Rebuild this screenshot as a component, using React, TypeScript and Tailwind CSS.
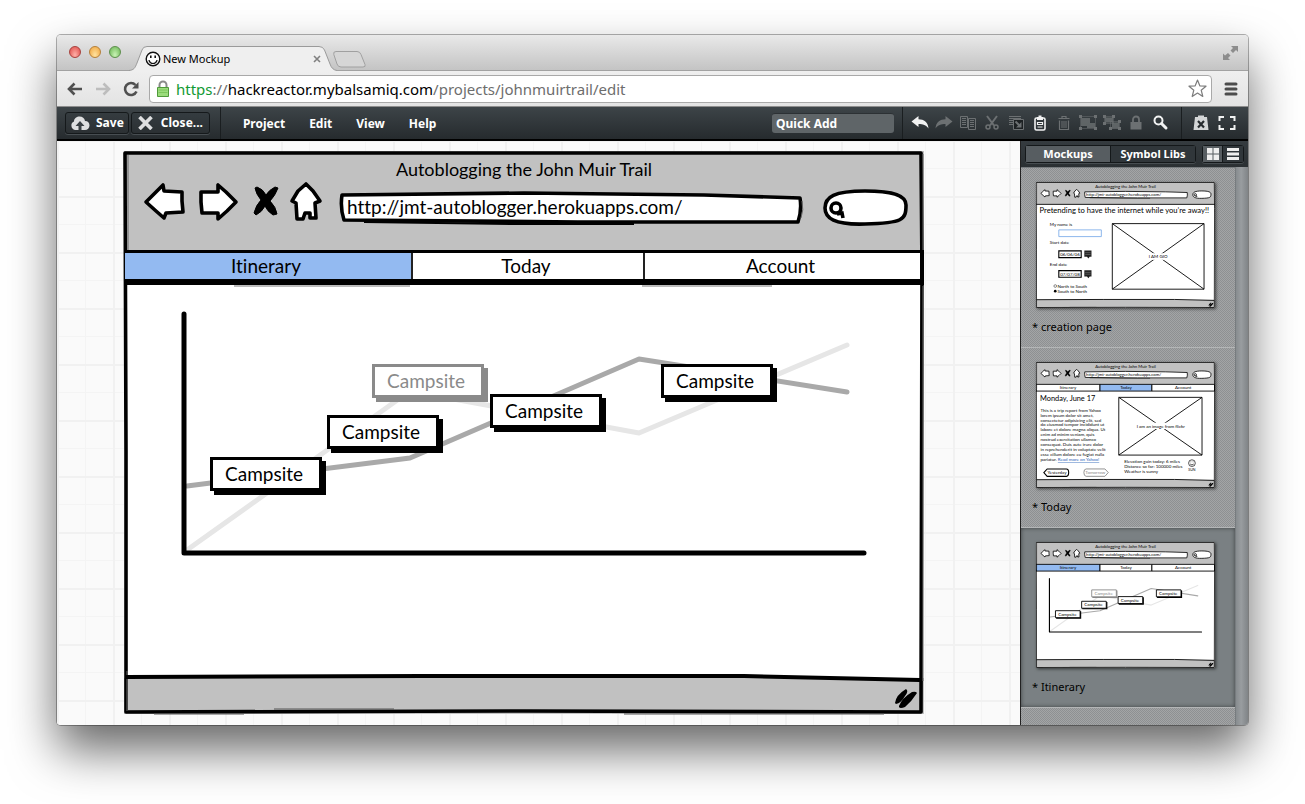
import type { ReactNode } from "react";

const ui = "font-['Noto_Sans','Open_Sans',sans-serif]";
const hand = "font-['Lato',sans-serif] [font-variant-ligatures:none]";

function SmallIcon({ children, size = 18 }: { children: ReactNode; size?: number }) {
  return (
    <svg width={size} height={size} viewBox="0 0 18 18" fill="none" aria-hidden="true" className="block shrink-0">
      {children}
    </svg>
  );
}

const LIT = "#f1f2f2";
const DIM = "#6c7072";

const tools: { name: string; off?: boolean; art: ReactNode }[] = [
  { name: "Undo", art: <path d="M.5 7.500 7.500 2v3.200C13 5.200 17 8 17.500 14.500 15 11 12 10 7.500 10v3z" fill={LIT} /> },
  { name: "Redo", off: true, art: <path d="M17.500 7.500 10.500 2v3.200C5 5.200 1 8 .5 14.500 3 11 6 10 10.500 10v3z" fill={DIM} /> },
  {
    name: "Duplicate",
    off: true,
    art: (
      <>
        <path d="M1.500 2.500h7v11h-7zM9.500 4.500h7v11h-7z" stroke={DIM} />
        <path d="M3 4.500h4M3 6.500h4M3 8.500h4M3 10.500h4M11 6.500h4M11 8.500h4M11 10.500h4M11 12.500h4" stroke={DIM} />
      </>
    ),
  },
  {
    name: "Cut",
    off: true,
    art: (
      <>
        <path d="M4 2 11 11.500M14 2 7 11.500" stroke={DIM} strokeWidth="2" />
        <circle cx="5" cy="13" r="2" stroke={DIM} strokeWidth="1.500" />
        <circle cx="13" cy="13" r="2" stroke={DIM} strokeWidth="1.500" />
      </>
    ),
  },
  {
    name: "Send to back",
    off: true,
    art: (
      <>
        <path d="M2 2.500h12M2 4.500h12M2 6.500h4M2 8.500h4M2 10.500h4" stroke={DIM} />
        <path d="M6.500 5.500h10v10h-10z" fill="#1d2123" stroke={DIM} />
        <path d="m8.500 7.500 4 4" stroke={DIM} strokeWidth="2" />
        <path d="M14.500 8v5.500H9z" fill={DIM} />
      </>
    ),
  },
  {
    name: "Paste",
    art: (
      <>
        <rect x="4" y="4" width="10" height="12" rx="1.500" stroke={LIT} strokeWidth="1.600" />
        <path d="M6 3h1.500V1.500h3V3H12v3H6z" fill={LIT} />
        <path d="M6.500 8.500h5v2h-5zM6.500 13h5" stroke={LIT} strokeWidth="1.200" />
      </>
    ),
  },
  {
    name: "Delete",
    off: true,
    art: (
      <>
        <path d="M3.500 4.500h11M7 4V2.500h4V4M4.500 6.500v9h9v-9" stroke={DIM} strokeWidth="1.200" />
        <path d="M7 7v7M9 7v7M11 7v7" stroke={DIM} />
      </>
    ),
  },
  {
    name: "Group",
    off: true,
    art: (
      <>
        <path d="M2 4h9v5h5v5H8v-2H2z" fill={DIM} fillOpacity=".8" />
        <path d="M1.500 2.500h15v12h-15z" stroke={DIM} strokeDasharray="1 1" />
        <path d="M0 1h3v3H0zM15 1h3v3h-3zM0 13h3v3H0zM15 13h3v3h-3z" fill={DIM} />
      </>
    ),
  },
  {
    name: "Ungroup",
    off: true,
    art: (
      <>
        <path d="M2 3.500h8v5H2zM9 8.500h7v6H9z" fill={DIM} fillOpacity=".8" />
        <path d="M1.500 2.500h9v7h-9zM7.500 7.500h9v7h-9z" stroke={DIM} strokeDasharray="1 1" />
        <path d="M0 1h3v3H0zM9 1h3v3H9zM0 8h3v3H0zM15 6h3v3h-3zM6 13h3v3H6zM15 13h3v3h-3z" fill={DIM} />
      </>
    ),
  },
  {
    name: "Lock",
    off: true,
    art: (
      <>
        <path d="M3.500 8h11v7.500h-11z" fill={DIM} />
        <path d="M6 8V5.500a3 3 0 0 1 6 0V8" stroke={DIM} strokeWidth="1.800" />
      </>
    ),
  },
  {
    name: "Zoom",
    art: (
      <>
        <circle cx="7.500" cy="6.500" r="4" stroke={LIT} strokeWidth="2" />
        <path d="m10.500 9.500 4.500 4.500" stroke={LIT} strokeWidth="3" strokeLinecap="round" />
      </>
    ),
  },
];

function BrowserChrome() {
  return (
    <header>
      <div className="relative flex h-9 items-end border-b border-[#a2a2a2] bg-linear-to-b from-[#e9e9e9] to-[#c4c4c4] pl-3">
        <div className="flex h-9 items-center gap-2">
          <button aria-label="Close window" className="size-3 rounded-full border border-[#a8413d] bg-radial-[at_50%_80%] from-[#ffb0a8] to-[#dd4845]" />
          <button aria-label="Minimise window" className="size-3 rounded-full border border-[#b5803a] bg-radial-[at_50%_80%] from-[#ffe3a0] to-[#efa23a]" />
          <button aria-label="Zoom window" className="size-3 rounded-full border border-[#5d8f4c] bg-radial-[at_50%_80%] from-[#c9f3b5] to-[#67b350]" />
        </div>
        <div className="relative z-10 ml-2 -mb-px h-[25px] w-52">
          <svg viewBox="0 0 208 25" className="absolute inset-0 size-full" aria-hidden="true">
            <path d="M0 24.500C5 24 6 22 8 17L13 4Q14 .5 18 .5H190Q194 .5 195.500 4L201 18Q203 24 208 24.500V25H0z" fill="#efefef" />
            <path d="M0 24.500C5 24 6 22 8 17L13 4Q14 .5 18 .5H190Q194 .5 195.500 4L201 18Q203 24 208 24.500" fill="none" stroke="#9a9a9a" />
          </svg>
          <div className="relative flex h-full items-center pt-px pr-3 pl-4">
            <svg width="16" height="16" viewBox="0 0 16 16" fill="none" stroke="#111" aria-hidden="true">
              <circle cx="8" cy="8" r="6.800" strokeWidth="1.400" fill="#fff" />
              <path d="M4 9.500c1.500 4 6.500 4 8 0M3.500 9.500h1M11.500 9.500h1" strokeWidth="1.200" />
              <path d="M5.800 4.500v2.500M10.200 4.500v2.500" strokeWidth="1.600" />
            </svg>
            <span className={`${ui} ml-0.5 grow text-[11px] text-black`}>New Mockup</span>
            <button aria-label="Close tab" className="p-1">
              <svg width="8" height="8" viewBox="0 0 8 8" stroke="#808080" strokeWidth="1.600" aria-hidden="true">
                <path d="m1 1 6 6M7 1 1 7" />
              </svg>
            </button>
          </div>
        </div>
        <button aria-label="New tab" className="mb-0.5 -ml-1">
          <svg width="33" height="17" viewBox="0 0 33 17" fill="#d6d6d6" stroke="#a0a0a0" aria-hidden="true">
            <path d="M3 .5h21q3 0 4 3l4 10q1 2.500-2 2.500H8q-3 0-4-3L.8 3.500Q0 .5 3 .5z" />
          </svg>
        </button>
        <button aria-label="Full screen" className="mr-2.5 mb-2.5 ml-auto">
          <svg width="15" height="14" viewBox="0 0 15 14" fill="#8d8d8d" aria-hidden="true">
            <path d="M8 0h7v6l-2-2-3 3-2.500-2.500L10 2zM0 14V7.500l2 2 3-2.500L7.500 9.500 5 12l2 2z" />
          </svg>
        </button>
      </div>
      <div className="flex h-9 items-center border-b border-[#8d8d8d] bg-linear-to-b from-[#efefef] to-[#e3e3e3] px-2.5">
        <button aria-label="Back">
          <svg width="16" height="16" viewBox="0 0 16 16" fill="none" stroke="#505050" strokeWidth="2.600" aria-hidden="true">
            <path d="M15 8H2M7.500 2.500 2 8l5.500 5.500" />
          </svg>
        </button>
        <button aria-label="Forward" className="ml-3">
          <svg width="16" height="16" viewBox="0 0 16 16" fill="none" stroke="#bdbdbd" strokeWidth="2.600" aria-hidden="true">
            <path d="M1 8h13M8.500 2.500 14 8l-5.500 5.500" />
          </svg>
        </button>
        <button aria-label="Reload" className="ml-3">
          <svg width="16" height="16" viewBox="0 0 16 16" aria-hidden="true">
            <path d="M13.500 10.500A6 6 0 1 1 12.500 4" fill="none" stroke="#505050" strokeWidth="2.600" />
            <path d="M15.500 1v6.500H9z" fill="#505050" />
          </svg>
        </button>
        <div className="ml-2.5 flex h-7 grow items-center rounded-sm border border-[#a9a9a9] bg-white pr-1 pl-1.5">
          <svg width="14" height="18" viewBox="0 0 14 18" aria-hidden="true">
            <path d="M3.500 8V5a3.500 3.500 0 0 1 7 0v3" fill="none" stroke="#8a8a8a" strokeWidth="2" />
            <path d="M1.500 7.500h11v9h-11z" fill="#9bdc7c" stroke="#4f9a3a" />
            <path d="M2.500 10h9M2.500 12.500h9" stroke="#7cc65c" />
          </svg>
          <p className={`${ui} ml-1.5 grow text-[15px] leading-5 text-[#6d6d6d]`}>
            <span className="text-[#129a33]">https</span>://<span className="text-black">hackreactor.mybalsamiq.com</span>/projects/johnmuirtrail/edit
          </p>
          <button aria-label="Bookmark this page">
            <svg width="19" height="19" viewBox="0 0 19 19" fill="#fff" stroke="#7c7c7c" strokeWidth="1.200" strokeLinejoin="round" aria-hidden="true">
              <path d="m9.500 1 2.300 5.800 6.200.4-4.800 4 1.600 6.300-5.300-3.500-5.300 3.500 1.600-6.300-4.800-4 6.200-.4z" />
            </svg>
          </button>
        </div>
        <button aria-label="Browser menu" className="ml-3">
          <svg width="14" height="14" viewBox="0 0 14 14" stroke="#4c4c4c" strokeWidth="3" strokeLinecap="round" aria-hidden="true">
            <path d="M2 2h10M2 7h10M2 12h10" />
          </svg>
        </button>
      </div>
    </header>
  );
}

function AppToolbar() {
  const pressable =
    "flex h-[22px] items-center rounded-[3px] border border-[#15191b] bg-linear-to-b from-[#353c40] to-[#2b3033] text-xs font-bold shadow-[0_1px_0_#474d51]";
  return (
    <div className={`${ui} flex h-[34px] items-center border-b-2 border-black bg-linear-to-b from-[#3d4448] to-[#262b2e] text-xs text-white`}>
      <button className={`${pressable} ml-2 gap-1.5 px-1`}>
        <svg width="20" height="15" viewBox="0 0 20 15" aria-hidden="true">
          <path d="M5 14a4.500 4.500 0 0 1-1-8.500C4 2 7 .5 9.500.5c3 0 5 1.500 5.500 4.500 3 0 4.500 2 4.500 4.500S17.500 14 15 14z" fill="#dedfe0" />
          <path d="M10 5l4.500 5H11.500v4h-3v-4H5.500z" fill="#3a4044" />
        </svg>
        Save
      </button>
      <button className={`${pressable} ml-0.5 gap-2 px-1.5`}>
        <svg width="15" height="14" viewBox="0 0 15 14" stroke="#dedfe0" strokeWidth="3.600" aria-hidden="true">
          <path d="m1.500 1 12 12M13.500 1l-12 12" />
        </svg>
        Close...
      </button>
      <nav className="ml-2.5 flex h-full items-center gap-6 border-l border-[#1a1e20] pt-0.5 pl-[22px] font-bold">
        <button>Project</button>
        <button>Edit</button>
        <button>View</button>
        <button>Help</button>
      </nav>
      <input
        aria-label="Quick Add"
        placeholder="Quick Add"
        className="ml-auto h-5 w-[122px] rounded-[3px] border-t border-[#2c3134] bg-[#5f6568] px-1 font-bold text-white placeholder:text-white"
      />
      <div className="ml-2 flex h-full items-center gap-1.5 border-l border-[#1a1e20] pr-3 pl-2">
        {tools.map((tool) => (
          <button key={tool.name} aria-label={tool.name} disabled={tool.off}>
            <SmallIcon>{tool.art}</SmallIcon>
          </button>
        ))}
      </div>
      <div className="flex h-full items-center gap-2 border-l border-[#1a1e20] pr-3 pl-2.5">
        <button aria-label="Clear markup">
          <SmallIcon>
            <path d="M3 3h12l1.500 13h-15zM6 1.500h6V5H6z" fill="#d4d6d7" />
            <path d="m6 7 6 6.500M12 7l-6 6.500" stroke="#262b2e" strokeWidth="2.200" />
          </SmallIcon>
        </button>
        <button aria-label="Present">
          <SmallIcon>
            <path d="M6 3H1.500v4M12 3h4.500v4M6 15H1.500v-4M12 15h4.500v-4" stroke={LIT} strokeWidth="2" />
          </SmallIcon>
        </button>
      </div>
    </div>
  );
}

/* Hand-drawn glyphs, in the mockup's own 800 x 563 space. */
function NavSketch() {
  return (
    <g fill="#fff" stroke="#000" strokeWidth="3.600" strokeLinejoin="round">
      <path d="M22 51 31 42l8-8 1 6 18 1v9l1 11-17 1-2 5-8-7z" />
      <path d="M112 51 102 41l-8-7v7l-17 0v10l1 11 16 0v6l9-8z" />
      <path d="M182 33l7 7 7 10-5 2 1 15h-6v-5h-5l-2 6h-6l-1-16-4-2 6-10z" />
      <path d="M133 36q6 2 9 8 3-5 9-8l3 1q-3 8-8 13 6 6 7 13l-4 1q-6-4-8-9-3 6-9 9l-2-2q2-8 7-13-5-6-6-12z" fill="#000" strokeWidth="1" />
    </g>
  );
}

function AddressSketch() {
  return (
    <>
      <path d="M218 44 400 42l180 2 96 3q2 12-2 24l-220 0-234-2q-4-12-2-25z" fill="#fff" stroke="#000" strokeWidth="3.600" strokeLinejoin="round" />
      <path d="M240 71l150 2 120 0" fill="none" stroke="#000" strokeWidth="2" />
      <path d="M678 50q2 9-1 17" fill="none" stroke="#666" strokeWidth="1" />
    </>
  );
}

function SearchSketch() {
  return (
    <g fill="none" stroke="#000" strokeWidth="3.600">
      <path d="M701 57c0-11 9-17 40-17 30 0 41 5 41 14 0 15-3 18-41 19-31 1-40-6-40-16z" fill="#fff" />
      <circle cx="712" cy="57" r="5" />
      <path d="m713 63 5-1 1 5" />
    </g>
  );
}

function ResizeSketch() {
  return (
    <path d="M771 552q1-8 11-14 3 2-1 7-4 7-9 8zM775 555q3-8 13-14 4-1 5 1-5 8-12 14-5 2-6 0z" fill="#000" />
  );
}

function FrameSketch() {
  return (
    <g fill="none" stroke="#000" strokeLinejoin="round">
      <path d="M1 2 797 2 798 120 797 561 400 560 2 561 2 300z" strokeWidth="3.600" />
      <path d="M4 4v118M3 520v40M799 3v98M799 135v395" stroke="#666" strokeWidth="1" />
      <path d="M2 526 300 525 620 525 796 529" strokeWidth="4" />
      <path d="M150 558h120M30 563h90M500 563h260" stroke="#555" strokeWidth="1" />
    </g>
  );
}

const boxes = [
  { x: 86, y: 306, faded: false },
  { x: 203, y: 264, faded: false },
  { x: 248, y: 213, faded: true },
  { x: 366, y: 243, faded: false },
  { x: 537, y: 213, faded: false },
];

function ChartSketch() {
  return (
    <g fill="none" strokeLinecap="round" strokeLinejoin="round" strokeWidth="5">
      <path d="M63 399 286 240 515 282 723 194" stroke="#e6e6e6" />
      <path d="M63 335 286 307 515 208 723 241" stroke="#a9a9a9" />
      <path d="M60 163V402H740" stroke="#000" />
    </g>
  );
}

const tabs = [
  { label: "Itinerary", width: "w-[286px]" },
  { label: "Today", width: "w-[232px]" },
  { label: "Account", width: "grow" },
];

function MockBrowser() {
  return (
    <section className={`${hand} relative flex h-[563px] w-[800px] flex-col bg-white text-[19px] text-black`}>
      <div className="h-[99px] bg-[#c1c1c1] pt-1.5">
        <h1 className="text-center text-lg leading-6">Autoblogging the John Muir Trail</h1>
      </div>
      <nav className="relative z-20 flex h-[35px] border-t-3 border-r-4 border-b-6 border-l border-black">
        {tabs.map((tab, i) => (
          <button
            key={tab.label}
            className={`${tab.width} ${i === 0 ? "bg-[#93baf1]" : "border-l-2 border-[#222] bg-white"} pr-1 leading-6`}
          >
            {tab.label}
          </button>
        ))}
      </nav>
      <div className="grow" />
      <div className="h-9 bg-[#c1c1c1]" />
      <svg viewBox="0 0 800 563" className="absolute inset-0 size-full overflow-visible" aria-hidden="true">
        <path d="M110 135h176M518 135h130" stroke="#bbb" strokeWidth="2" />
        <NavSketch />
        <AddressSketch />
        <SearchSketch />
        <ChartSketch />
        <FrameSketch />
        <ResizeSketch />
      </svg>
      <input
        aria-label="Address"
        defaultValue="http://jmt-autoblogger.herokuapps.com/"
        className="absolute top-11 left-[223px] h-6 w-[440px] bg-transparent"
      />
      {boxes.map((box) => (
        <button
          key={box.x}
          style={{ left: box.x, top: box.y }}
          className={`absolute h-[34px] w-28 border-3 bg-white pr-1 leading-6 ${
            box.faded
              ? "border-[#8a8a8a] text-[#8a8a8a] shadow-[4px_4px_0_#8a8a8a]"
              : "z-10 border-black shadow-[4px_4px_0_#000]"
          }`}
        >
          Campsite
        </button>
      ))}
    </section>
  );
}

function ThumbFrame({ active, children }: { active?: string; children: ReactNode }) {
  const cells = [
    { label: "Itinerary", x: 0, w: 286 },
    { label: "Today", x: 286, w: 232 },
    { label: "Account", x: 518, w: 280 },
  ];
  return (
    <svg viewBox="0 0 800 563" className={`${hand} block w-full bg-white shadow-[1px_1px_3px_rgba(0,0,0,0.6)]`} fontSize="20">
      <path d="M0 0h800v98H0zM0 527h800v36H0z" fill="#c1c1c1" />
      <text x="400" y="26" fontSize="19" textAnchor="middle">Autoblogging the John Muir Trail</text>
      <NavSketch />
      <AddressSketch />
      <text x="224" y="64" fontSize="19">http://jmt-autoblogger.herokuapps.com/</text>
      <SearchSketch />
      {active ? (
        cells.map((c) => (
          <g key={c.label}>
            <path d={`M${c.x} 100h${c.w}v30H${c.x}z`} fill={c.label === active ? "#93baf1" : "#fff"} stroke="#000" strokeWidth="4" />
            <text x={c.x + c.w / 2} y="122" textAnchor="middle">{c.label}</text>
          </g>
        ))
      ) : (
        <path d="M0 100h800" stroke="#000" strokeWidth="4" />
      )}
      {children}
      <FrameSketch />
      <ResizeSketch />
    </svg>
  );
}

function CreationThumb() {
  return (
    <ThumbFrame>
      <text x="16" y="140" fontSize="34">Pretending to have the internet while you’re away!!</text>
      <text x="62" y="195">My name is</text>
      <path d="M102 214h190v30H102z" fill="none" stroke="#7faeea" strokeWidth="4" />
      <text x="62" y="278">Start date</text>
      <path d="M102 308h100v30H102zM102 396h100v30H102z" fill="none" stroke="#000" strokeWidth="5" />
      <text x="108" y="330">06/06/06</text>
      <text x="62" y="376">End date</text>
      <text x="108" y="418">07/07/08</text>
      <path d="M216 306h32v28h-8l-6 8-6-8h-12zM216 394h32v28h-8l-6 8-6-8h-12z" fill="#222" />
      <path d="M220 316h24M220 324h24M220 404h24M220 412h24" stroke="#999" strokeWidth="2" />
      <circle cx="86" cy="465" r="6" fill="none" stroke="#000" strokeWidth="2" />
      <circle cx="86" cy="488" r="6" fill="#000" />
      <text x="96" y="472">North to South</text>
      <text x="96" y="495">South to North</text>
      <path d="M341 186h410v293H341zM341 186l410 293M751 186 341 479" fill="none" stroke="#000" strokeWidth="4" />
      <path d="M505 318h82v30h-82z" fill="#fff" />
      <text x="546" y="339" textAnchor="middle">I AM GIO</text>
    </ThumbFrame>
  );
}

const report = [
  "This is a trip report from Yahoo",
  "lorem ipsum dolor sit amet,",
  "consectetur adipisicing elit, sed",
  "do eiusmod tempor incididunt ut",
  "labore et dolore magna aliqua. Ut",
  "enim ad minim veniam, quis",
  "nostrud exercitation ullamco",
  "consequat. Duis aute irure dolor",
  "in reprehenderit in voluptate velit",
  "esse cillum dolore eu fugiat nulla",
];

function TodayThumb() {
  return (
    <ThumbFrame active="Today">
      <text x="18" y="175" fontSize="33">Monday, June 17</text>
      {report.map((line, i) => (
        <text key={line} x="20" y={222 + i * 22}>{line}</text>
      ))}
      <text x="20" y="443">
        pariatur. <tspan fill="#2a62b8" textDecoration="underline">Read more on Yahoo!</tspan>
      </text>
      <path d="M370 158h372v258H370zM370 158l372 258M742 158 370 416" fill="none" stroke="#000" strokeWidth="4" />
      <path d="M450 272h216v28H450z" fill="#fff" />
      <text x="558" y="293" textAnchor="middle">I am an image from flickr</text>
      <text x="394" y="452">Elevation gain today: 6 miles</text>
      <text x="394" y="475">Distance so far: 100000 miles</text>
      <text x="394" y="498">Weather is sunny</text>
      <circle cx="697" cy="452" r="15" fill="none" stroke="#000" strokeWidth="3" />
      <path d="M689 456q8 8 16 0M692 445v3M702 445v3" fill="none" stroke="#000" strokeWidth="3" />
      <text x="697" y="487" fontSize="16" textAnchor="middle">SUN</text>
      <path d="M35 494 50 478h86q10 0 10 16t-10 17H50z" fill="#fff" stroke="#000" strokeWidth="5" />
      <text x="94" y="501" textAnchor="middle">Yesterday</text>
      <g fill="#888" stroke="none">
        <path d="M323 494l-15-16h-84q-10 0-10 16t10 17h84z" fill="#fff" stroke="#888" strokeWidth="4" />
        <text x="265" y="501" textAnchor="middle">Tomorrow</text>
      </g>
    </ThumbFrame>
  );
}

function ItineraryThumb() {
  return (
    <ThumbFrame active="Itinerary">
      <ChartSketch />
      {boxes.map((b) => (
        <g key={b.x} fill={b.faded ? "#8a8a8a" : "#000"}>
          <path d={`M${b.x + 4} ${b.y + 4}h112v33h-112z`} />
          <path d={`M${b.x + 1} ${b.y + 1}h110v31h-110z`} fill="#fff" stroke={b.faded ? "#8a8a8a" : "#000"} strokeWidth="4" />
          <text x={b.x + 54} y={b.y + 23} textAnchor="middle">Campsite</text>
        </g>
      ))}
    </ThumbFrame>
  );
}

const pages = [
  { label: "* creation page", thumb: <CreationThumb /> },
  { label: "* Today", thumb: <TodayThumb /> },
  { label: "* Itinerary", thumb: <ItineraryThumb />, selected: true },
];

function Sidebar() {
  return (
    <aside className={`${ui} flex w-[228px] shrink-0 flex-col border-l border-[#222] bg-[#94989b]`}>
      <div className="flex h-[26px] shrink-0 items-center bg-linear-to-b from-[#353b3f] to-[#2b3033] px-1 text-[11px] font-bold text-white">
        <div className="flex h-[18px] grow rounded-[3px] border border-[#14181a] shadow-[0_1px_0_#474d51]">
          <button className="flex w-[85px] items-center justify-center border-r border-[#14181a] bg-[#575d61]">Mockups</button>
          <button className="flex grow items-center justify-center bg-[#30363a]">Symbol Libs</button>
        </div>
        <div className="ml-1.5 flex h-[18px] rounded-[3px] border border-[#14181a] shadow-[0_1px_0_#474d51]">
          <button aria-label="Grid view" className="flex w-5 items-center justify-center border-r border-[#14181a] bg-[#575d61]">
            <svg width="12" height="12" viewBox="0 0 12 12" fill="#eee" aria-hidden="true">
              <path d="M0 0h5.500v5.500H0zM6.500 0H12v5.500H6.500zM0 6.500h5.500V12H0zM6.500 6.500H12V12H6.500z" />
            </svg>
          </button>
          <button aria-label="List view" className="flex w-5 items-center justify-center bg-[#30363a]">
            <svg width="12" height="12" viewBox="0 0 12 12" fill="#eee" aria-hidden="true">
              <path d="M0 0h12v3H0zM0 4.500h12v3H0zM0 9h12v3H0z" />
            </svg>
          </button>
        </div>
      </div>
      <div className="flex grow bg-linear-to-r from-[#82878a] from-[94%] via-[#999da0] via-[97%] to-[#808487] pr-3">
        <div className="flex grow flex-col border-t border-r border-[#777c7f] bg-[#999b9d] bg-[repeating-conic-gradient(#8e9092_0%_25%,#a3a5a6_0%_50%)] bg-size-[2px_2px]">
          {pages.map((page) => (
            <button
              key={page.label}
              className={`flex h-[180px] w-full flex-col border-b border-[#b4b6b7] pt-3.5 text-left text-[11px] text-black ${
                page.selected ? "bg-[#7a8083] shadow-[inset_0_0_4px_rgba(0,0,0,0.5)]" : ""
              }`}
            >
              <span className="ml-[15px] block w-[179px]">{page.thumb}</span>
              <span className="mt-[11px] ml-[11px] leading-4">{page.label}</span>
            </button>
          ))}
        </div>
      </div>
    </aside>
  );
}

export default function App() {
  return (
    <div className="min-h-screen bg-white px-[57px] pt-[35px] pb-[79px]">
      <main className="overflow-hidden rounded-[4px] shadow-[0_0_0_1px_rgba(0,0,0,0.3),0_25px_48px_rgba(0,0,0,0.6)]">
        <BrowserChrome />
        <AppToolbar />
        <div className="flex">
          <div className="min-w-0 grow overflow-hidden bg-[#fafafa] bg-[linear-gradient(to_right,#f1f1f1_2px,transparent_2px),linear-gradient(to_bottom,#f1f1f1_2px,transparent_2px),linear-gradient(to_right,#f4f4f4_1px,transparent_1px),linear-gradient(to_bottom,#f4f4f4_1px,transparent_1px)] bg-size-[56px_56px,56px_56px,28px_28px,28px_28px] bg-position-[0px_0px,0px_-1px,0px_0px,0px_-1px] pt-2.5 pb-[11px] pl-[67px]">
            <MockBrowser />
          </div>
          <Sidebar />
        </div>
      </main>
    </div>
  );
}
